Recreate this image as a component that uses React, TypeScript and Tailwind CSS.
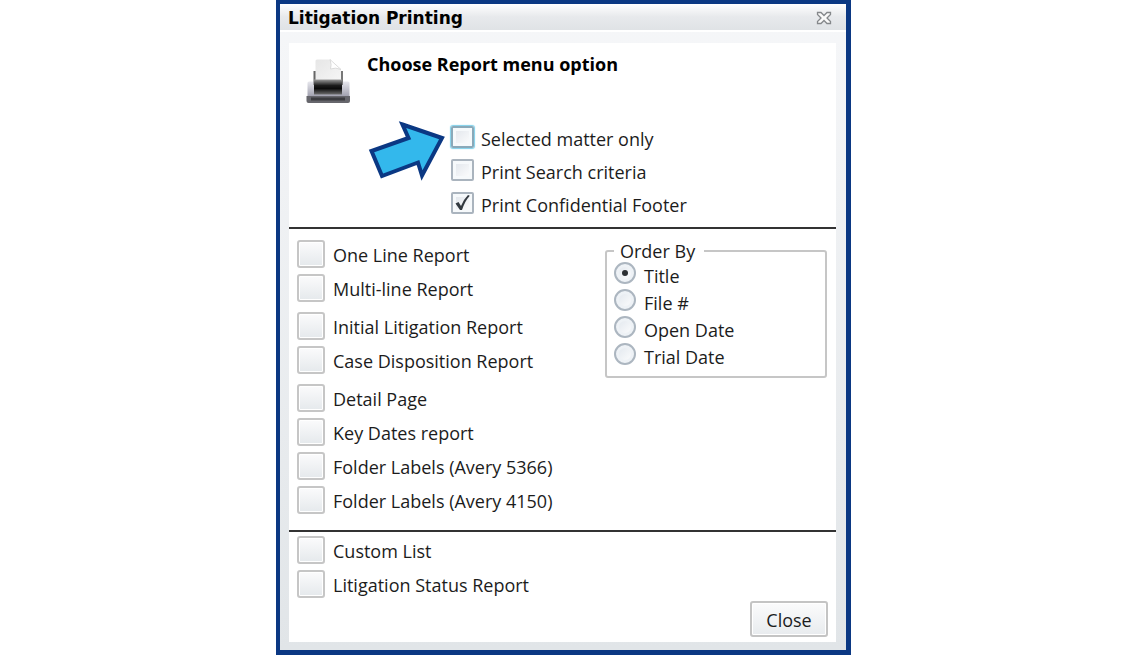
import { useState } from 'react';

const reportGroups = [
  ['One Line Report', 'Multi-line Report'],
  ['Initial Litigation Report', 'Case Disposition Report'],
  ['Detail Page', 'Key Dates report', 'Folder Labels (Avery 5366)', 'Folder Labels (Avery 4150)'],
];

const customReports = ['Custom List', 'Litigation Status Report'];

const orderOptions = ['Title', 'File #', 'Open Date', 'Trial Date'];

function toId(label: string) {
  return label.toLowerCase().replace(/[^a-z0-9]+/g, '-');
}

function PrinterIcon() {
  return (
    <svg className="h-12 w-12 flex-shrink-0" viewBox="0 0 48 48" aria-hidden="true">
      <defs>
        <linearGradient id="printer-body" x1="0" y1="0" x2="0" y2="1">
          <stop offset="0" stopColor="#e8e8ee" />
          <stop offset="1" stopColor="#a2a2b0" />
        </linearGradient>
        <linearGradient id="printer-slot" x1="0" y1="0" x2="0" y2="1">
          <stop offset="0" stopColor="#9a9a9a" />
          <stop offset="0.4" stopColor="#1c1c1c" />
          <stop offset="0.6" stopColor="#0c0c0c" />
          <stop offset="1" stopColor="#6c6c6c" />
        </linearGradient>
        <linearGradient id="printer-paper" x1="0" y1="0" x2="1" y2="1">
          <stop offset="0" stopColor="#e6e6e6" />
          <stop offset="1" stopColor="#f6f6f6" />
        </linearGradient>
      </defs>
      <path d="M2.500 26q0-1.500 1.500-1.500h39q1.500 0 1.500 1.500v13h-42z" fill="url(#printer-body)" />
      <rect x="8.500" y="14" width="2.500" height="14" fill="#666" />
      <rect x="35.500" y="14" width="2.500" height="14" fill="#777" />
      <path d="M10.500 4q0-1.500 1.500-1.500h13l11 10v12h-25.500z" fill="url(#printer-paper)" />
      <path d="M25 2.500q2 5 .5 9.500 5-2 10.500.5z" fill="#fff" stroke="#d4d4d4" strokeWidth="0.8" />
      <rect x="9" y="22.500" width="28" height="15" fill="url(#printer-slot)" />
      <path d="M1.500 39h43.500v5q0 2-2 2H3.500q-2 0-2-2z" fill="#66666c" />
      <rect x="6" y="40.500" width="34" height="3" fill="#3c3c40" />
    </svg>
  );
}

function PointerArrow() {
  return (
    <svg
      className="pointer-events-none absolute -top-2 -left-[85px] h-[64px] w-[80px]"
      viewBox="366 118 80 64"
      aria-hidden="true"
    >
      <path
        d="M402.500 124.500 442 138l-20 37.500-4-13-36 13.500-10.500-25 37-13z"
        fill="#33b8ec"
        stroke="#0b3883"
        strokeWidth="4"
      />
    </svg>
  );
}

interface OptionCheckboxProps {
  label: string;
  defaultChecked?: boolean;
  highlighted?: boolean;
}

function OptionCheckbox({ label, defaultChecked, highlighted }: OptionCheckboxProps) {
  return (
    <label className="flex h-[33px] items-start gap-[7px]">
      <span className="relative block h-[22px] w-[23px]">
        <input
          type="checkbox"
          defaultChecked={defaultChecked}
          className={
            highlighted
              ? 'peer block h-[22px] w-[23px] appearance-none rounded-xs border-2 border-[#8aa9b9] bg-linear-to-br from-[#dfe4ea] to-white shadow-[inset_0_0_0_3px_#f6f9fb,0_0_1px_1px_#7fd0ea]'
              : 'peer block h-[22px] w-[23px] appearance-none rounded-xs border-2 border-[#aab4be] bg-linear-to-br from-[#dfe4ea] to-white shadow-[inset_0_0_0_3px_#f6f9fb]'
          }
        />
        <svg
          className="pointer-events-none absolute inset-0 hidden h-[22px] w-[23px] peer-checked:block"
          viewBox="0 0 23 22"
          aria-hidden="true"
        >
          <path d="M4.500 11.500 7.500 10l2.500 4Q12.500 7.500 17 3l1.800.8Q14 9 11 18H9z" fill="#333a40" />
        </svg>
      </span>
      <span className="pt-px leading-6">{label}</span>
    </label>
  );
}

function ReportRow({ label }: { label: string }) {
  const id = toId(label);
  return (
    <div className="flex items-center gap-2">
      <button
        id={id}
        type="button"
        className="h-7 w-7 flex-shrink-0 rounded-[3px] border-2 border-[#c6c6c6] bg-linear-to-b from-[#fbfbfc] to-[#e5e9ec] shadow-[inset_0_0_0_1px_#ffffff]"
      />
      <label htmlFor={id} className="pt-0.5 leading-6">
        {label}
      </label>
    </div>
  );
}

function OrderByGroup() {
  const [order, setOrder] = useState('Title');

  return (
    <fieldset className="w-[222px] self-start rounded-[3px] border-2 border-[#c6c6c6] px-[7px] pb-[6px]">
      <legend className="pr-[9px] pl-1.5 leading-[22px]">Order By</legend>
      {orderOptions.map((option) => (
        <label key={option} className="flex h-[27px] items-start gap-2">
          <span className="relative block h-[22px] w-[22px]">
            <input
              type="radio"
              name="order-by"
              checked={order === option}
              onChange={() => setOrder(option)}
              className="peer block h-[22px] w-[22px] appearance-none rounded-full border-2 border-[#acb6c0] bg-linear-to-br from-[#dfe5ec] to-white shadow-[inset_0_0_0_3px_#eef2f6]"
            />
            <span className="pointer-events-none absolute inset-2 hidden rounded-full bg-[#2b2f33] peer-checked:block" />
          </span>
          <span className="pt-0.5 leading-6">{option}</span>
        </label>
      ))}
    </fieldset>
  );
}

export default function App() {
  return (
    <main className="flex justify-center bg-white pl-[3px] font-['Open_Sans','Noto_Sans',sans-serif] text-[18px] text-[#1c1c1c]">
      <section
        role="dialog"
        aria-labelledby="dialog-title"
        className="w-full max-w-[575px] border-4 border-r-5 border-b-5 border-[#0b3883] bg-linear-to-b from-[#f6f7f9] to-[#e1e5e8]"
      >
        <header className="flex h-7 items-center justify-between border-b-2 border-white bg-linear-to-b from-white via-[#e7e9ec] to-[#e0e3e6] pr-[14px] pl-2">
          <h1
            id="dialog-title"
            className="pt-0.5 font-['DejaVu_Sans',sans-serif] text-[17px] leading-6 font-bold text-black"
          >
            Litigation Printing
          </h1>
          <button type="button" aria-label="Close window" className="pt-0.5">
            <svg className="h-[14px] w-4" viewBox="0 0 16 14" aria-hidden="true">
              <path
                d="M1.500 1.500h3.500L8 4.500l3-3h3.500v2L11 7l3.500 3.500v2H11l-3-3-3 3H1.500v-2L5 7 1.500 3.500z"
                fill="#fafafa"
                stroke="#85888b"
                strokeWidth="1.300"
              />
            </svg>
          </button>
        </header>

        <div className="mt-[11px] mr-[10px] mb-2 ml-[9px] bg-white pb-[5px]">
          <div className="flex h-[83px] gap-[14px] pt-[14px] pl-4">
            <PrinterIcon />
            <h2 className="text-[18px] leading-[14px] font-bold text-black">Choose Report menu option</h2>
          </div>

          <div className="relative ml-[162px] h-[101px]">
            <OptionCheckbox label="Selected matter only" highlighted />
            <OptionCheckbox label="Print Search criteria" />
            <OptionCheckbox label="Print Confidential Footer" defaultChecked />
            <PointerArrow />
          </div>

          <div className="flex justify-between border-y-2 border-[#333333] pt-[11px] pr-[9px] pb-4 pl-2">
            <div className="flex flex-col gap-[10px]">
              {reportGroups.map((group) => (
                <div key={group[0]} className="flex flex-col gap-1.5">
                  {group.map((label) => (
                    <ReportRow key={label} label={label} />
                  ))}
                </div>
              ))}
            </div>
            <OrderByGroup />
          </div>

          <div className="flex flex-col gap-1.5 pt-1 pl-2">
            {customReports.map((label) => (
              <ReportRow key={label} label={label} />
            ))}
          </div>

          <div className="flex justify-end pt-[3px] pr-2">
            <button
              type="button"
              className="h-9 w-[78px] rounded-[3px] border-2 border-[#c4c4c4] bg-linear-to-b from-[#fbfbfc] to-[#e8ebee] pt-0.5 leading-6 shadow-[inset_0_0_0_1px_#ffffff]"
            >
              Close
            </button>
          </div>
        </div>
      </section>
    </main>
  );
}
